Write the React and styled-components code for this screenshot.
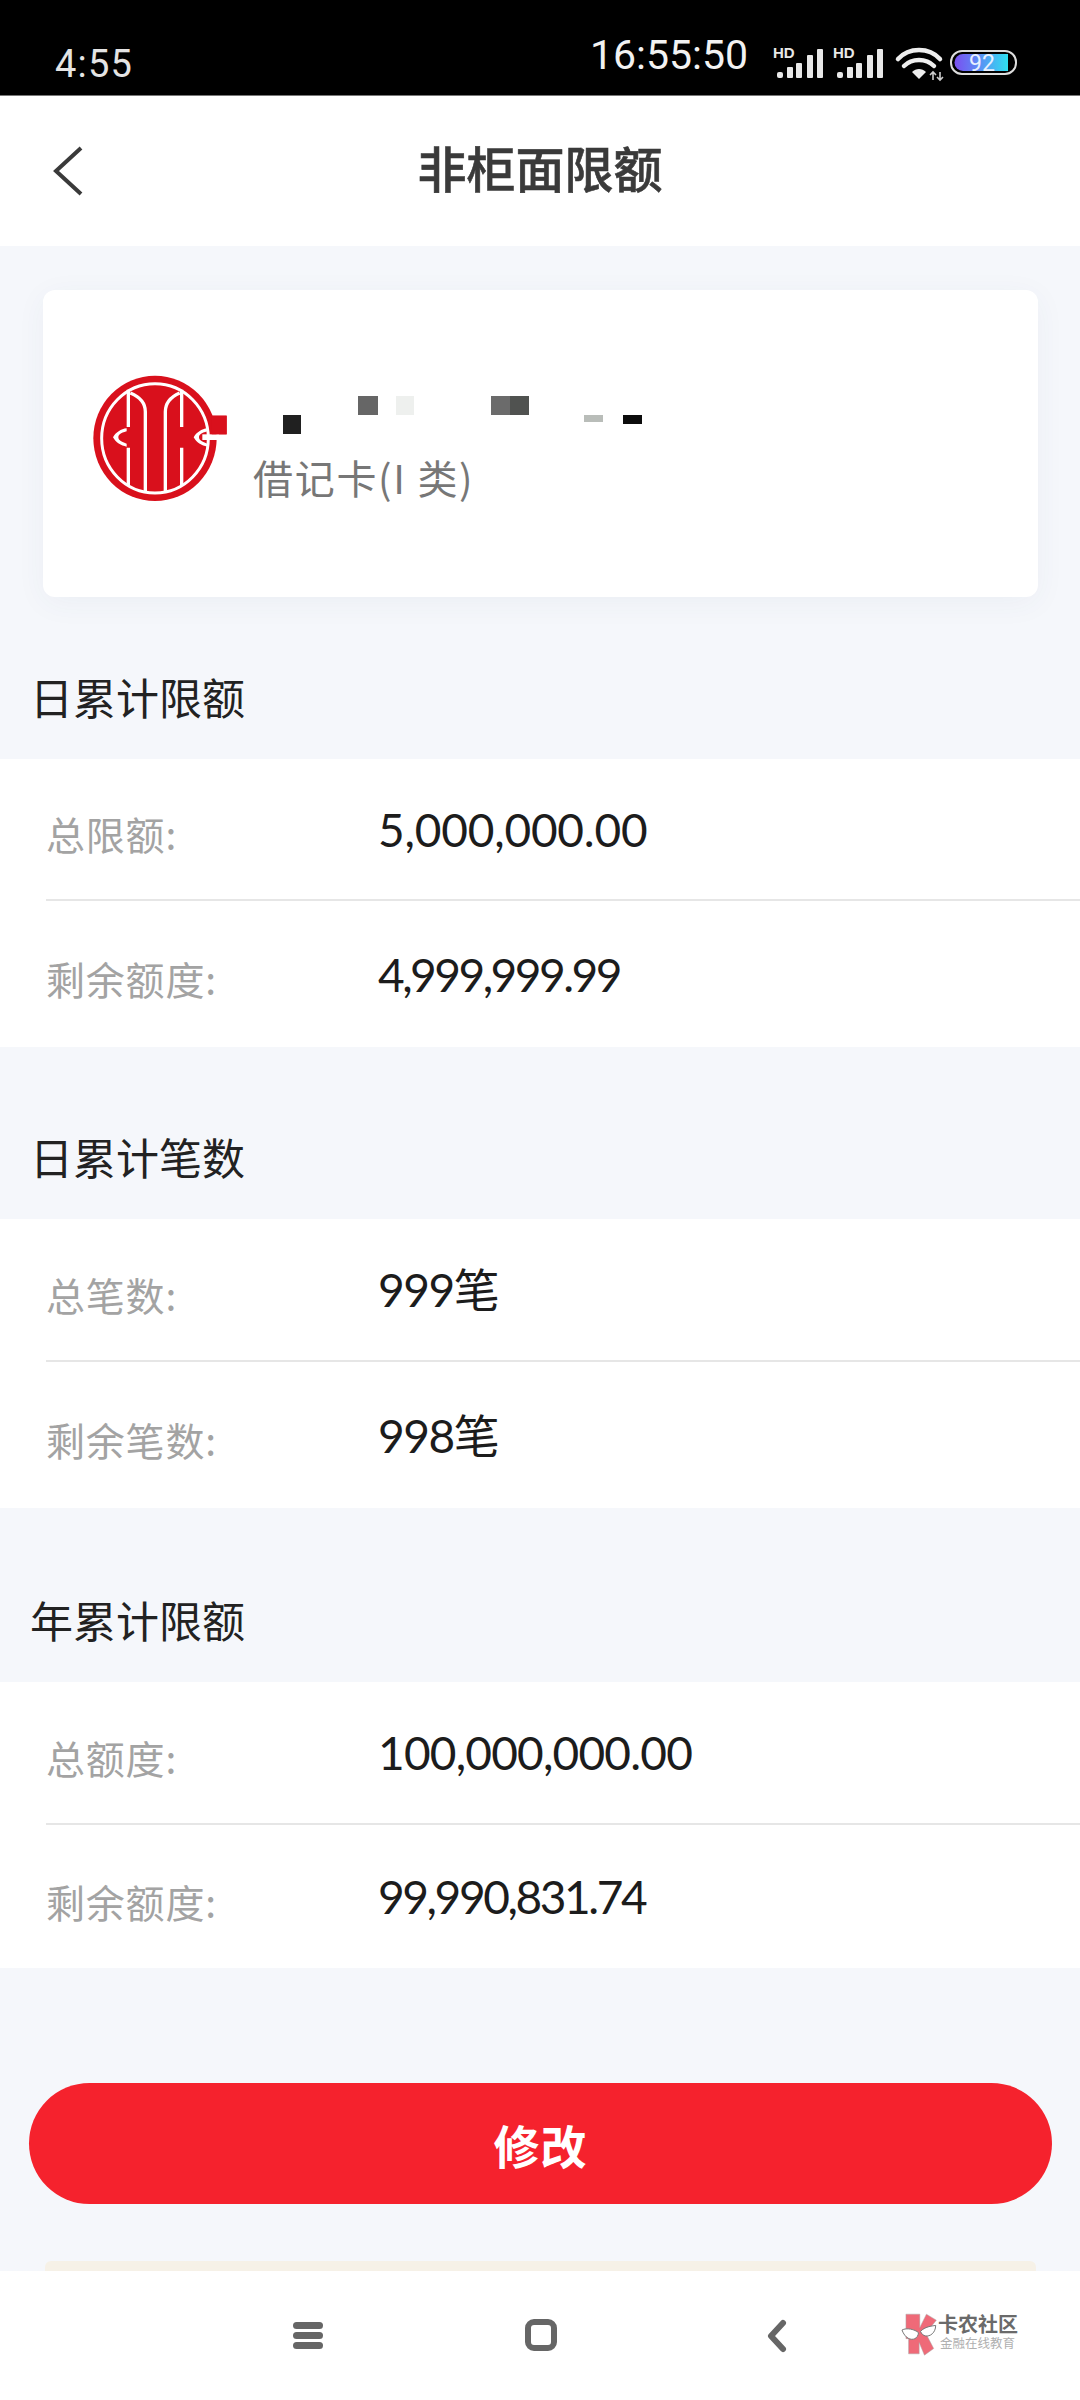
import React from "react";
import styled, { createGlobalStyle } from "styled-components";

const Global = createGlobalStyle`
  html, body { margin: 0; padding: 0; background: #f5f7fb; }
  * { box-sizing: border-box; }
  body { font-family: "Noto Sans CJK SC", "Noto Sans", sans-serif; }
`;

const Page = styled.div`
  width: 1080px;
  height: 2400px;
  display: flex;
  flex-direction: column;
  overflow: hidden;
  background: #f5f7fb;
`;

const StatusBar = styled.div`
  height: 96px;
  flex: none;
  background: #000;
  color: #eee;
  display: flex;
  align-items: flex-start;
  justify-content: space-between;
  padding: 0 63px 0 55px;
  border-bottom: 1px solid #777;
`;

const Clock = styled.span`
  font-family: "Roboto", sans-serif;
  font-size: 38px;
  line-height: 40px;
  letter-spacing: 1.2px;
  margin-top: 44px;
  color: #e4e4e4;
`;

const StatusRight = styled.div`
  display: flex;
  align-items: flex-start;
`;

const Seconds = styled.span`
  font-family: "Roboto", sans-serif;
  font-weight: 400;
  font-size: 41px;
  line-height: 46px;
  margin-top: 32px;
  margin-right: 25px;
  color: #f2f2f2;
`;

const StatusIcons = styled.svg`
  width: 244px;
  height: 40px;
  margin-top: 44px;
  display: block;
`;

const Header = styled.header`
  height: 150px;
  flex: none;
  background: #fff;
  position: relative;
  display: flex;
  align-items: center;
  justify-content: center;
`;

const BackIcon = styled.svg`
  position: absolute;
  left: 50px;
  top: 46px;
  width: 36px;
  height: 56px;
`;

const Title = styled.h1`
  margin: 0 0 8px;
  font-size: 49px;
  line-height: 60px;
  font-weight: 500;
  color: #3a3a3a;
  -webkit-text-stroke: 0.6px #3a3a3a;
`;

const Content = styled.main`
  flex: 1;
  min-height: 0;
  overflow: hidden;
  display: flex;
  flex-direction: column;
`;

const AccountCard = styled.section`
  margin: 44px 42px 0 43px;
  height: 307px;
  flex: none;
  background: #fff;
  border-radius: 12px;
  box-shadow: 0 6px 30px rgba(60, 70, 110, 0.05);
  display: flex;
  align-items: flex-start;
  padding: 75px 0 0 42px;
`;

const Logo = styled.svg`
  width: 150px;
  height: 150px;
  flex: none;
  margin-right: 18px;
`;

const AccountInfo = styled.div`
  display: flex;
  flex-direction: column;
`;

const Mosaic = styled.svg`
  width: 390px;
  height: 40px;
  display: block;
  margin-top: 31px;
`;

const CardType = styled.div`
  font-size: 40px;
  line-height: 46px;
  margin-top: 18px;
  color: #777;
  letter-spacing: 1.7px;
`;

const SectionTitle = styled.h2`
  margin: ${(p) => p.$top}px 0 0;
  padding: 0 0 6px 30px;
  font-size: 43px;
  line-height: 114px;
  font-weight: 400;
  color: #222;
`;

const Panel = styled.div`
  background: #fff;
  flex: none;
`;

const Row = styled.div`
  display: grid;
  grid-template-columns: 332px 1fr;
  align-items: center;
  margin-left: 46px;
  height: ${(p) => p.$h}px;
  border-bottom: ${(p) => (p.$line ? "2px solid #e6e6e6" : "none")};
`;

const Label = styled.span`
  font-size: 39px;
  line-height: 50px;
  margin-top: 8px;
  color: #a3a3a3;
  letter-spacing: 0.8px;
`;

const Value = styled.span`
  font-family: "Lato", "Noto Sans CJK SC", sans-serif;
  font-size: 46px;
  line-height: 56px;
  margin-top: 1px;
  color: #1c1c1c;
  letter-spacing: ${(p) => p.$spacing ?? 0}px;
`;

const SubmitButton = styled.button`
  flex: none;
  margin: 115px 28px 0 29px;
  height: 121px;
  border: none;
  border-radius: 61px;
  background: #f5222d;
  color: #fff;
  font-family: inherit;
  font-size: 46px;
  font-weight: 700;
  letter-spacing: 1px;
`;

const Notice = styled.div`
  flex: none;
  margin: 57px 44px 0 45px;
  height: 40px;
  background: #f6f1e7;
  border-radius: 6px 6px 0 0;
`;

const NavBar = styled.nav`
  height: 129px;
  flex: none;
  background: #fff;
  position: relative;
`;

const NavIcons = styled.svg`
  width: 1080px;
  height: 129px;
  display: block;
`;

const Watermark = styled.div`
  position: absolute;
  left: 900px;
  top: 41px;
  display: flex;
  align-items: flex-start;
`;

const WatermarkText = styled.div`
  display: flex;
  flex-direction: column;
  margin-top: 1px;
`;

const WatermarkName = styled.span`
  font-size: 20px;
  line-height: 22px;
  font-weight: 700;
  color: #6a6a6a;
`;

const WatermarkSlogan = styled.span`
  font-size: 12.5px;
  line-height: 14px;
  margin-top: 1px;
  margin-left: 2px;
  color: #b0b0b0;
`;

const Signal = ({ x }) => (
  <g fill="#e8e8e8">
    <text x={x} y="14" fontFamily="Liberation Sans, sans-serif" fontWeight="700" fontSize="15">HD</text>
    <rect x={x + 4} y="28" width="6" height="6" rx="2" />
    <rect x={x + 14} y="23" width="6" height="11" rx="1" />
    <rect x={x + 23} y="19" width="6" height="15" rx="1" />
    <rect x={x + 34} y="11" width="6" height="23" rx="1" />
    <rect x={x + 44} y="5" width="6" height="29" rx="1" />
  </g>
);

const StatusGlyphs = () => (
  <StatusIcons viewBox="0 0 244 40">
    <defs>
      <linearGradient id="batt" x1="0" x2="1">
        <stop offset="0" stopColor="#7a4ff0" />
        <stop offset="0.45" stopColor="#5c8cf5" />
        <stop offset="1" stopColor="#2fe0f0" />
      </linearGradient>
    </defs>
    <Signal x={0} />
    <Signal x={60} />
    <g fill="none" stroke="#eee" strokeWidth="4.5" strokeLinecap="round">
      <path d="M125 15 C136 3 156 3 167 15" />
      <path d="M131 22 C139 14 153 14 161 22" />
    </g>
    <path d="M139 28 C143 24 149 24 153 28 L146 35 Z" fill="#eee" />
    <path d="M160 28 v8 M157 31 l3 -3 l3 3 M167 28 v8 M164 33 l3 3 l3 -3" fill="none" stroke="#ccc" strokeWidth="1.6" />
    <rect x="178" y="7" width="65" height="23" rx="11" fill="none" stroke="#ddd" strokeWidth="2" />
    <path d="M190 10 H235 V27 H190 A8.5 8.5 0 0 1 190 10 Z" fill="url(#batt)" />
    <text x="196" y="27" fontFamily="Roboto, sans-serif" fontSize="23" fill="#e8f0ff">92</text>
  </StatusIcons>
);

const CiticLogo = () => (
  <Logo viewBox="0 0 450 450">
    <rect x="370" y="152" width="55" height="56" fill="#d9101c" />
    <ellipse cx="210" cy="220" rx="185" ry="188" fill="#d9101c" />
    <ellipse cx="210" cy="220" rx="160" ry="164" fill="none" stroke="#fff" strokeWidth="9" />
    <g fill="none" stroke="#fff" strokeWidth="10">
      <path d="M130 74 V186 M130 248 V362" />
      <path d="M290 74 V186 M290 248 V362" />
      <path d="M181 384 V140 C181 112 165 96 136 84" />
      <path d="M241 384 V140 C241 112 257 96 284 84" />
    </g>
    <path d="M125 190 C108 192 92 202 84 217 C92 232 108 242 125 245 L125 236 C106 230 100 224 100 217 C100 210 106 204 125 199 Z" fill="#fff" />
    <path d="M367 190 C350 192 334 202 326 217 C334 232 350 242 367 245 L367 236 C348 230 342 224 342 217 C342 210 348 204 367 199 Z" fill="#fff" />
    <rect x="352" y="208" width="50" height="17" fill="#fff" />
    <rect x="380" y="152" width="45" height="56" fill="#d9101c" />
  </Logo>
);

const PixelMosaic = () => (
  <Mosaic viewBox="0 0 390 40">
    <rect x="30" y="19" width="18" height="19" fill="#202020" />
    <rect x="105" y="0" width="20" height="19" fill="#666" />
    <rect x="143" y="0" width="18" height="19" fill="#eef0ee" />
    <rect x="238" y="0" width="19" height="19" fill="#6b6b6b" />
    <rect x="257" y="0" width="19" height="19" fill="#505250" />
    <rect x="331" y="19" width="19" height="7" fill="#b9bdb9" />
    <rect x="370" y="19" width="19" height="9" fill="#0c0c0c" />
  </Mosaic>
);

const Watericon = () => (
  <svg width="38" height="45" viewBox="30 20 115 135">
    <path d="M48 26 H90 V66 L110 26 L140 44 L108 84 L132 130 L104 150 L88 112 L88 146 H56 V100 H48 Z" fill="#ef6a78" stroke="#aaa" strokeWidth="1.5" />
    <path d="M36 74 C50 66 75 72 86 82 C84 108 50 112 36 74 Z M92 78 C105 64 125 62 138 60 C138 92 102 104 92 78 Z" fill="#fff" stroke="#777" strokeWidth="3" />
  </svg>
);

const limitSections = [
  {
    title: "日累计限额",
    top: 42,
    rows: [
      { label: "总限额:", value: "5,000,000.00", h: 142, spacing: -0.2 },
      { label: "剩余额度:", value: "4,999,999.99", h: 146, spacing: -2.5 },
    ],
  },
  {
    title: "日累计笔数",
    top: 52,
    rows: [
      { label: "总笔数:", value: "999笔", h: 143, spacing: -1.4 },
      { label: "剩余笔数:", value: "998笔", h: 146, spacing: -1.4 },
    ],
  },
  {
    title: "年累计限额",
    top: 54,
    rows: [
      { label: "总额度:", value: "100,000,000.00", h: 143, spacing: -0.8 },
      { label: "剩余额度:", value: "99,990,831.74", h: 143, spacing: -2.4 },
    ],
  },
];

export default function App() {
  return (
    <Page>
      <Global />
      <StatusBar>
        <Clock>4:55</Clock>
        <StatusRight>
          <Seconds>16:55:50</Seconds>
          <StatusGlyphs />
        </StatusRight>
      </StatusBar>
      <Header>
        <BackIcon viewBox="0 0 36 56">
          <path d="M31 6 L6 29 L31 52" fill="none" stroke="#3a3a3a" strokeWidth="4" strokeLinejoin="miter" />
        </BackIcon>
        <Title>非柜面限额</Title>
      </Header>
      <Content>
        <AccountCard>
          <CiticLogo />
          <AccountInfo>
            <PixelMosaic />
            <CardType>借记卡(I 类)</CardType>
          </AccountInfo>
        </AccountCard>
        {limitSections.map((s) => (
          <React.Fragment key={s.title}>
            <SectionTitle $top={s.top}>{s.title}</SectionTitle>
            <Panel>
              {s.rows.map((r, i) => (
                <Row key={r.label} $h={r.h} $line={i === 0}>
                  <Label>{r.label}</Label>
                  <Value $spacing={r.spacing}>{r.value}</Value>
                </Row>
              ))}
            </Panel>
          </React.Fragment>
        ))}
        <SubmitButton>修改</SubmitButton>
        <Notice />
      </Content>
      <NavBar>
        <NavIcons viewBox="0 0 1080 129">
          <g fill="#666">
            <rect x="293" y="51" width="30" height="7" rx="3.5" />
            <rect x="293" y="61" width="30" height="7" rx="3.5" />
            <rect x="293" y="71" width="30" height="7" rx="3.5" />
          </g>
          <rect x="528" y="51" width="26" height="26" rx="6" fill="none" stroke="#666" strokeWidth="6" />
          <path d="M783 52 L771 65 L783 78" fill="none" stroke="#666" strokeWidth="6" strokeLinecap="round" strokeLinejoin="round" />
        </NavIcons>
        <Watermark>
          <Watericon />
          <WatermarkText>
            <WatermarkName>卡农社区</WatermarkName>
            <WatermarkSlogan>金融在线教育</WatermarkSlogan>
          </WatermarkText>
        </Watermark>
      </NavBar>
    </Page>
  );
}
